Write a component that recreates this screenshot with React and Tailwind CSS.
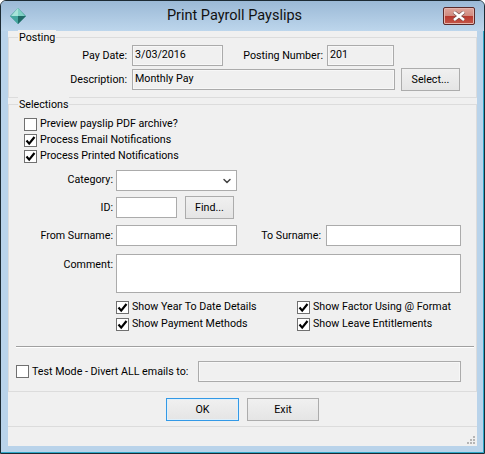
import { ChevronDown } from "lucide-react";

const FONT = "font-['Roboto',sans-serif]";

function TextBox({ width, height = "h-[21px]", value, disabled }) {
    return (
        <div
            className={`${width} ${height} shrink-0 border border-[#ababab] pl-[2px] leading-[17px] ${
                disabled ? "bg-[#f0f0f0] shadow-[inset_0_0_0_1px_#f7f7f7]" : "bg-white"
            }`}
        >
            {value}
        </div>
    );
}

function Btn({ width, height = "h-[23px]", focus, children }) {
    return (
        <button
            className={`${width} ${height} shrink-0 border ${
                focus ? "border-[#3399e6] shadow-[inset_0_0_0_1px_#dff0fb]" : "border-[#acacac]"
            } bg-gradient-to-b from-[#f0f0f0] to-[#e5e5e5] text-center`}
        >
            {children}
        </button>
    );
}

function Tick({ checked, label }) {
    return (
        <div className="flex items-center gap-[3px] whitespace-nowrap">
            <span className="flex h-[13px] w-[13px] shrink-0 items-center justify-center border border-[#707070] bg-white">
                {checked && (
                    <svg viewBox="0 0 11 11" className="h-[11px] w-[11px]">
                        <path d="M1.5 5.5 4.2 8.6 9.5 2" fill="none" stroke="#000" strokeWidth="2.2" />
                    </svg>
                )}
            </span>
            {label}
        </div>
    );
}

function Caption({ width = "w-[107px]", children }) {
    return <div className={`${width} shrink-0 whitespace-nowrap text-right`}>{children}</div>;
}

function Group({ title, className, children }) {
    return (
        <div className={`relative border border-[#dcdcdc] ${className}`}>
            <span className="absolute -top-[8px] left-[9px] bg-[#f0f0f0] px-[1px] leading-[15px]">{title}</span>
            {children}
        </div>
    );
}

function AppIcon() {
    return (
        <svg viewBox="0 0 16 16" className="h-[16px] w-[16px] shrink-0">
            <path d="M8 0 16 8 8 16 0 8Z" fill="#3f9c94" />
            <path d="M8 0 15 8H8Z" fill="#7fd0c4" />
            <path d="M8 0V8H1Z" fill="#a6e3d8" />
            <path d="M8 8H16L8 16Z" fill="#1f6a66" />
            <path d="M0 8H8V16Z" fill="#45a79f" />
        </svg>
    );
}

function CloseButton() {
    return (
        <div className="flex h-[18px] w-[32px] items-center justify-center rounded-[2px] border border-[#5a2a2a] bg-[linear-gradient(#dfa59b_0%,#d08b80_48%,#b8392f_52%,#c4574a_100%)] shadow-[inset_0_0_0_1px_#e5b5ad]">
            <svg viewBox="0 0 14 10" className="h-[10px] w-[14px]">
                <path d="M2 1 12 9M12 1 2 9" stroke="#6b4a48" strokeWidth="3.6" />
                <path d="M2 1 12 9M12 1 2 9" stroke="#fff" strokeWidth="2.6" />
            </svg>
        </div>
    );
}

export default function App() {
    return (
        <div className={`${FONT} flex h-[454px] w-[485px] flex-col rounded-t-[6px] border border-[#1c2a33] bg-[#b9d3ea] text-[10.7px] leading-[16px] text-black shadow-[inset_-1px_-1px_0_#2fa8c9]`}>
            <div className="flex h-[30px] shrink-0 items-center rounded-t-[5px] bg-gradient-to-b from-[#9bb9d6] to-[#bdd6ec] pl-[9px] pr-[9px]">
                <AppIcon />
                <div className="flex-1 text-center text-[14.5px] text-[#111]">Print Payroll Payslips</div>
                <CloseButton />
            </div>

            <div className="mx-[7px] flex h-[415px] flex-col bg-[#f0f0f0]">
                <Group title="Posting" className="mt-[6px] h-[61px] shrink-0">
                    <div className="mt-[7px] flex h-[21px] items-center">
                        <Caption width="w-[118px]">Pay Date:</Caption>
                        <div className="w-[5px]" />
                        <TextBox width="w-[91px]" value="3/03/2016" disabled />
                        <Caption width="w-[100px]">Posting Number:</Caption>
                        <div className="w-[4px]" />
                        <TextBox width="w-[67px]" value="201" disabled />
                    </div>
                    <div className="mt-[2px] flex h-[23px] items-center">
                        <Caption width="w-[118px]">Description:</Caption>
                        <div className="w-[5px]" />
                        <TextBox width="w-[263px]" value="Monthly Pay" disabled />
                        <div className="w-[6px]" />
                        <Btn width="w-[59px]">Select...</Btn>
                    </div>
                </Group>

                <Group title="Selections" className="mt-[6px] h-[288px] shrink-0 pl-[15px]">
                    <div className="mt-[11px] flex flex-col">
                        <div className="h-[16px]"><Tick label="Preview payslip PDF archive?" /></div>
                        <div className="h-[16px]"><Tick checked label="Process Email Notifications" /></div>
                        <div className="h-[16px]"><Tick checked label="Process Printed Notifications" /></div>
                    </div>

                    <div className="-ml-[15px] mt-[6px] flex flex-col">
                        <div className="flex items-center">
                            <Caption width="w-[104px]"><span className="relative -top-[1px]">Category:</span></Caption>
                            <div className="w-[3px]" />
                            <div className="flex h-[21px] w-[121px] items-center justify-end border border-[#ababab] bg-white pr-[3px]">
                                <ChevronDown className="h-[12px] w-[12px] text-[#444]" strokeWidth={3} />
                            </div>
                        </div>
                        <div className="mt-[5px] flex h-[23px] items-center">
                            <Caption width="w-[104px]">ID:</Caption>
                            <div className="w-[3px]" />
                            <TextBox width="w-[61px]" />
                            <div className="w-[8px]" />
                            <Btn width="w-[49px]">Find...</Btn>
                        </div>
                        <div className="mt-[6px] flex items-center">
                            <Caption width="w-[104px]">From Surname:</Caption>
                            <div className="w-[3px]" />
                            <TextBox width="w-[121px]" />
                            <Caption width="w-[84px]">To Surname:</Caption>
                            <div className="w-[5px]" />
                            <TextBox width="w-[135px]" />
                        </div>
                        <div className="mt-[8px] flex items-start">
                            <Caption width="w-[104px]"><span className="relative top-[3px]">Comment:</span></Caption>
                            <div className="w-[3px]" />
                            <TextBox width="w-[345px]" height="h-[39px]" />
                        </div>
                    </div>

                    <div className="-ml-[15px] mt-[6px] grid grid-cols-[181px_1fr] pl-[107px]">
                        <div className="h-[17px]"><Tick checked label="Show Year To Date Details" /></div>
                        <div className="h-[17px]"><Tick checked label="Show Factor Using @ Format" /></div>
                        <div className="h-[17px]"><Tick checked label="Show Payment Methods" /></div>
                        <div className="h-[17px]"><Tick checked label="Show Leave Entitlements" /></div>
                    </div>

                    <div className="-ml-[8px] mr-[2px] mt-[13px] h-[2px] border-t border-b border-t-[#a0a0a0] border-b-white" />

                    <div className="-ml-[8px] mt-[13px] flex h-[21px] items-center">
                        <div className="w-[182px] shrink-0"><Tick label="Test Mode - Divert ALL emails to:" /></div>
                        <TextBox width="w-[263px]" disabled />
                    </div>
                </Group>

                <div className="flex h-[35px] shrink-0 items-start gap-[8px] border-b border-[#dcdcdc] pl-[158px] pt-[6px]">
                    <Btn width="w-[73px]" focus>OK</Btn>
                    <Btn width="w-[72px]">Exit</Btn>
                </div>

                <div className="relative flex-1">
                    <svg viewBox="0 0 8 8" className="absolute bottom-[2px] right-[2px] h-[8px] w-[8px]">
                        <path d="M6 0h2v2H6zM3 3h2v2H3zM6 3h2v2H6zM0 6h2v2H0zM3 6h2v2H3zM6 6h2v2H6z" fill="#b5b5b5" />
                    </svg>
                </div>
            </div>
        </div>
    );
}
